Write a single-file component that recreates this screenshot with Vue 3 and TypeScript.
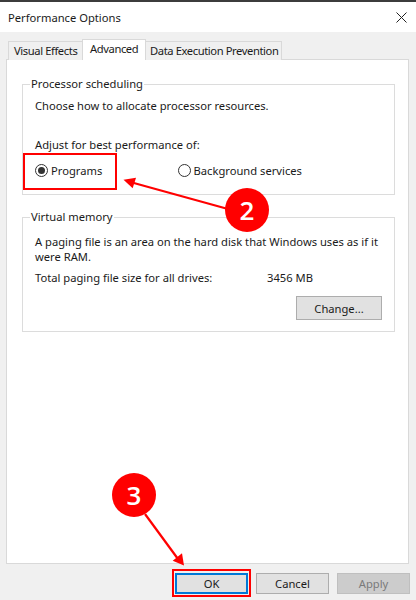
<script setup lang="ts">
const tabs = [
  { label: 'Visual Effects', active: false },
  { label: 'Advanced', active: true },
  { label: 'Data Execution Prevention', active: false },
]
const actions = [
  { label: 'OK', cls: 'primary' },
  { label: 'Cancel', cls: '' },
  { label: 'Apply', cls: 'disabled' },
]
</script>

<template>
  <div class="window">
    <header class="titlebar">
      <span class="title">Performance Options</span>
      <svg class="close" width="11" height="11" viewBox="0 0 11 11">
        <path d="M.5.5l10 10M10.5.5l-10 10" stroke="#222" stroke-width="1" fill="none" />
      </svg>
    </header>

    <main class="body">
      <nav class="tabs">
        <div v-for="t in tabs" :key="t.label" class="tab" :class="{ active: t.active }">{{ t.label }}</div>
      </nav>

      <section class="panel">
        <fieldset class="group first">
          <legend>Processor scheduling</legend>
          <p class="line">Choose how to allocate processor resources.</p>
          <p class="line adjust">Adjust for best performance of:</p>
          <div class="radios">
            <label class="radio wide"><span class="dot checked"></span>Programs</label>
            <label class="radio"><span class="dot"></span>Background services</label>
          </div>
        </fieldset>

        <fieldset class="group second">
          <legend>Virtual memory</legend>
          <p class="line para">A paging file is an area on the hard disk that Windows uses as if it were RAM.</p>
          <div class="total">
            <span class="total-label">Total paging file size for all drives:</span>
            <span>3456 MB</span>
          </div>
          <div class="change-row">
            <button class="btn change">Change...</button>
          </div>
        </fieldset>
      </section>

      <footer class="actions">
        <button v-for="a in actions" :key="a.label" class="btn action" :class="a.cls">{{ a.label }}</button>
      </footer>
    </main>

    <svg class="arrows" width="416" height="600" viewBox="0 0 416 600">
      <path d="M228 209L132 182.500" stroke="#f00" stroke-width="2.200" fill="none" />
      <path d="M123.500 179.700L136 177.700L132.700 188.300Z" fill="#f00" />
      <path d="M145 514L178 559" stroke="#f00" stroke-width="2.200" fill="none" />
      <path d="M184 565.500L172.700 560.700L182 553.300Z" fill="#f00" />
    </svg>
    <div class="mark mark-box programs"></div>
    <div class="mark mark-box ok"></div>
    <div class="mark badge two">2</div>
    <div class="mark badge three">3</div>
  </div>
</template>

<style>
html, body { margin: 0; padding: 0; background: #f0f0f0; }
</style>

<style scoped>
.window {
  position: relative;
  width: 416px;
  height: 600px;
  overflow: hidden;
  box-sizing: border-box;
  border-top: 2px solid #3c3c3c;
  display: flex;
  flex-direction: column;
  background: #f0f0f0;
  font-family: "Noto Sans", "Open Sans", sans-serif;
  font-size: 11.200px;
  color: #1a1a1a;
}
.titlebar {
  height: 30px;
  flex: none;
  background: #fff;
  display: flex;
  align-items: center;
  justify-content: space-between;
  padding: 0 9px 0 8px;
}
.title { font-size: 11.200px; }
.body {
  flex: 1;
  display: flex;
  flex-direction: column;
  padding: 7px 6px 0;
  min-height: 0;
}
.tabs {
  display: flex;
  align-items: flex-end;
  height: 21px;
  padding-left: 2px;
  position: relative;
  z-index: 1;
  margin-bottom: -1px;
}
.tab {
  height: 19px;
  line-height: 18px;
  box-sizing: border-box;
  padding: 0 4px;
  border: 1px solid #d9d9d9;
  border-bottom: 0;
  background: #f0f0f0;
  margin-left: -1px;
  white-space: nowrap;
  letter-spacing: -0.400px;
}
.tab:first-child { width: 75px; margin-left: 0; padding: 0 5px; }
.tab.active {
  width: 64px;
  height: 21px;
  line-height: 17px;
  background: #fff;
  padding: 0 7px;
}
.tab:last-child { width: 137px; }
.panel {
  height: 505px;
  width: 403px;
  flex: none;
  box-sizing: border-box;
  background: #fff;
  border: 1px solid #d9d9d9;
  padding: 16px 13px 0 15px;
  display: flex;
  flex-direction: column;
  gap: 14px;
}
.group {
  margin: 0;
  border: 1px solid #dcdcdc;
  padding: 0 12px;
  min-width: 0;
  box-sizing: border-box;
}
.group.first { height: 119px; }
.group.second { height: 123px; }
legend {
  margin-left: -5px;
  padding: 0 1px;
  line-height: 16px;
  font-size: 11.200px;
}
.line { margin: 0; line-height: 15px; }
.first .line { margin-top: 6px; }
.first .adjust { margin-top: 24px; }
.radios { display: flex; margin-top: 9px; }
.radio { display: flex; align-items: center; gap: 3px; height: 18px; }
.radio.wide { width: 142.500px; }
.dot {
  width: 13px;
  height: 13px;
  box-sizing: border-box;
  border-radius: 50%;
  border: 1px solid #333;
  background: #fff;
  position: relative;
  flex: none;
}
.dot.checked::after {
  content: "";
  position: absolute;
  inset: 2px;
  border-radius: 50%;
  background: #333;
}
.para { margin-top: 9px; width: 350px; }
.total { display: flex; margin-top: 6px; line-height: 15px; }
.total-label { width: 232px; }
.change-row { display: flex; justify-content: flex-end; margin-top: 11px; }
.btn {
  font: inherit;
  color: inherit;
  box-sizing: border-box;
  background: #e1e1e1;
  border: 1px solid #adadad;
  padding: 0;
  border-radius: 0;
}
.change { width: 86px; height: 24px; }
.actions {
  display: flex;
  justify-content: flex-end;
  gap: 8px;
  padding: 9px 0 0;
}
.action { width: 73px; height: 21px; }
.action.primary { border: 2px solid #0078d7; }
.action.disabled { background: #cccccc; border-color: #bfbfbf; color: #7a7a7a; }
.arrows { position: absolute; left: 0; top: -2px; pointer-events: none; }
.mark { position: absolute; box-sizing: border-box; }
.mark-box { border: 2px solid #f00; }
.programs { left: 23px; top: 151px; width: 94px; height: 37px; }
.ok { left: 172px; top: 567px; width: 79px; height: 28px; }
.badge {
  width: 44px;
  height: 44px;
  border-radius: 50%;
  background: #f00;
  color: #fff;
  font-family: "Open Sans", sans-serif;
  font-weight: 600;
  font-size: 26px;
  line-height: 44px;
  text-align: center;
}
.two { left: 225px; top: 186px; }
.three { left: 112px; top: 471px; }
</style>
